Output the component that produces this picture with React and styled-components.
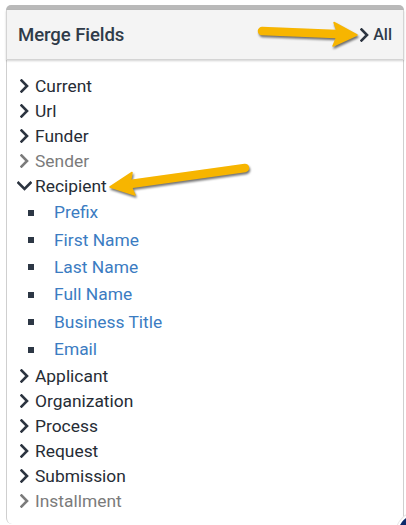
import React from "react";
import styled, { createGlobalStyle } from "styled-components";

const Global = createGlobalStyle`
  html, body { margin: 0; padding: 0; background: #fff; }
  body { font-family: Roboto, "Liberation Sans", Arial, sans-serif; }
`;

const Page = styled.div`
  width: 406px;
  height: 525px;
  position: relative;
  overflow: hidden;
`;

const Panel = styled.div`
  position: relative;
  margin: 5px 2px 0 6px;
  width: 398px;
  border-top: 5px solid #b9b9b9;
  border-radius: 5px 5px 6px 6px;
`;

const Header = styled.div`
  height: 50px;
  box-sizing: border-box;
  background: #f4f4f4;
  border: 1px solid #d4d4d4;
  border-top: none;
  box-shadow: 0 1px 2px rgba(0, 0, 0, 0.18);
  display: flex;
  align-items: center;
  justify-content: space-between;
  padding: 0 11px 0 11px;
  position: relative;
  z-index: 1;
`;

const Title = styled.div`
  font-size: 18.6px;
  font-weight: 500;
  color: #2f3b49;
  letter-spacing: -0.1px;
`;

const AllLink = styled.div`
  display: flex;
  align-items: center;
  gap: 4px;
  font-size: 16px;
  font-weight: 500;
  color: #2f3b49;
`;

const Body = styled.div`
  border-left: 1px solid #cfcfcf;
  border-right: 1px solid #cfcfcf;
  border-bottom-left-radius: 6px;
  padding: 13.5px 0 10px 11px;
  min-height: 440px;
`;

const Row = styled.div`
  display: flex;
  align-items: center;
  height: 25px;
  gap: 5px;
  font-size: 17.4px;
  color: ${(p) => (p.$muted ? "#7b7b7b" : "#262c35")};
`;

const IconBox = styled.span`
  width: 12px;
  flex: 0 0 12px;
  display: flex;
  justify-content: center;
  align-items: center;
  overflow: visible;

  svg {
    flex-shrink: 0;
  }
`;

const SubList = styled.div`
  display: flex;
  flex-direction: column;
  padding: 0 0 1px 0;
`;

const SubRow = styled.div`
  display: flex;
  align-items: center;
  height: 27.4px;
  font-size: 17.4px;
  color: #3b7cc2;
`;

const Bullet = styled.span`
  width: 6px;
  height: 6px;
  background: #2d3745;
  margin: 1px 20px 0 10px;
`;

const Corner = styled.div`
  position: absolute;
  left: 396px;
  top: 512px;
  width: 40px;
  height: 40px;
  border-radius: 50%;
  background: #0d2a6b;
  border: 2px solid #fff;
  box-shadow: 0 0 0 1px #e6e6e6;
`;

const Overlay = styled.svg`
  position: absolute;
  left: 0;
  top: 0;
  width: 406px;
  height: 525px;
  pointer-events: none;
  z-index: 5;
  filter: drop-shadow(1px 2px 1.2px rgba(0, 0, 0, 0.55));
`;

const Right = ({ color = "#2c3440" }) => (
  <svg width="9" height="14" viewBox="0 0 9 14">
    <path d="M1.5 1.5 L7 7 L1.5 12.5" fill="none" stroke={color} strokeWidth="2.6" strokeLinecap="square" />
  </svg>
);

const Down = () => (
  <svg width="15" height="10" viewBox="0 0 15 10">
    <path d="M1.5 1.8 L7.5 7.8 L13.5 1.8" fill="none" stroke="#2c3440" strokeWidth="2.6" strokeLinecap="square" />
  </svg>
);

const Item = ({ label, muted, open }) => (
  <Row $muted={muted}>
    <IconBox>{open ? <Down /> : <Right color={muted ? "#7b7b7b" : "#2c3440"} />}</IconBox>
    {label}
  </Row>
);

const subs = ["Prefix", "First Name", "Last Name", "Full Name", "Business Title", "Email"];

export default function App() {
  return (
    <Page>
      <Global />
      <Panel>
        <Header>
          <Title>Merge Fields</Title>
          <AllLink>
            <Right />
            All
          </AllLink>
        </Header>
        <Body>
          <Item label="Current" />
          <Item label="Url" />
          <Item label="Funder" />
          <Item label="Sender" muted />
          <Item label="Recipient" open />
          <SubList>
            {subs.map((s) => (
              <SubRow key={s}>
                <Bullet />
                {s}
              </SubRow>
            ))}
          </SubList>
          <Item label="Applicant" />
          <Item label="Organization" />
          <Item label="Process" />
          <Item label="Request" />
          <Item label="Submission" />
          <Item label="Installment" muted />
        </Body>
      </Panel>
      <Corner />
      <Overlay viewBox="0 0 406 525">
        <g fill="#f7b500" stroke="#f7b500">
          <line x1="262" y1="31" x2="336" y2="34" strokeWidth="8.5" strokeLinecap="round" />
          <polygon points="357,35 334,22.5 338,34 333,46" strokeWidth="1.5" strokeLinejoin="round" />
          <line x1="245" y1="168" x2="132" y2="183.8" strokeWidth="8.5" strokeLinecap="round" />
          <polygon points="110,187 132,172.5 130,184 135,195" strokeWidth="1.5" strokeLinejoin="round" />
        </g>
      </Overlay>
    </Page>
  );
}
